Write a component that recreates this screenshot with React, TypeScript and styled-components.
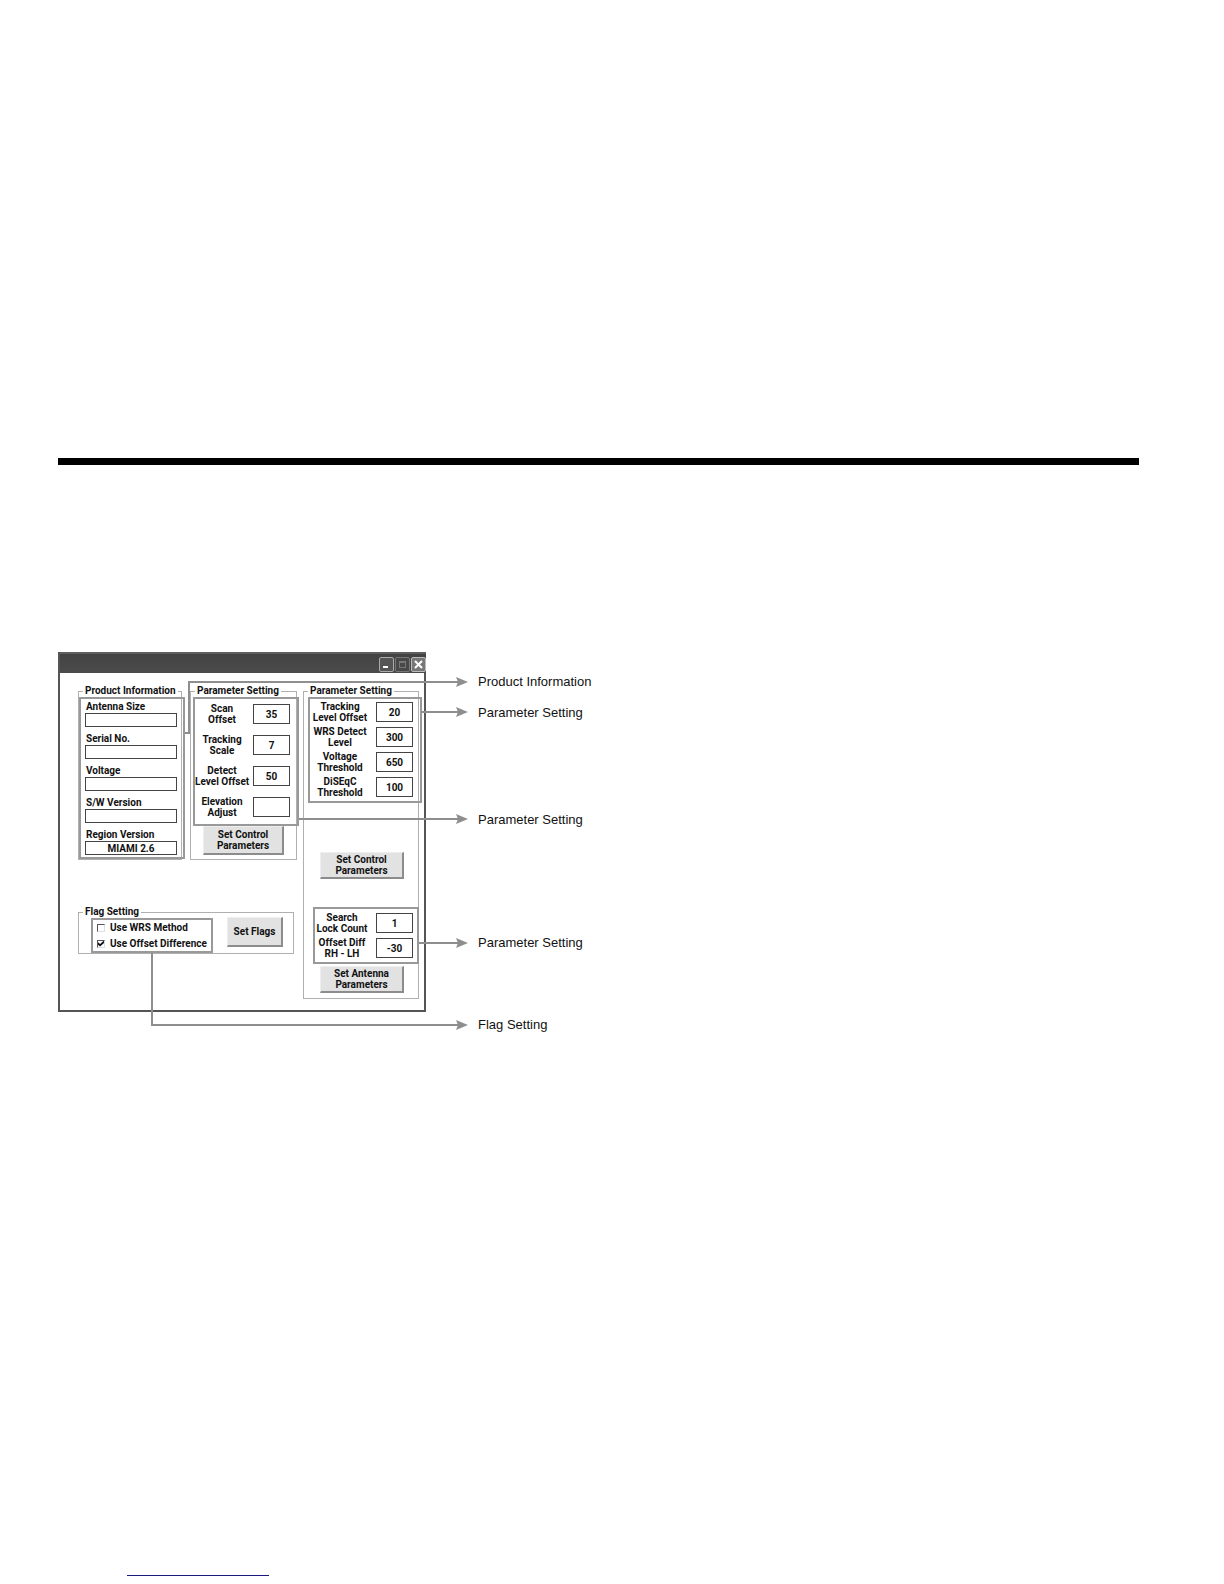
import React from "react";
import styled, { createGlobalStyle } from "styled-components";

const GlobalStyle = createGlobalStyle`
  *, *::before, *::after { box-sizing: border-box; }
  body { margin: 0; background: #fff; color: #111; }
`;

const uiFont = `Roboto, "Liberation Sans", sans-serif`;

const Page = styled.main`
  display: flex;
  flex-direction: column;
  min-height: 100vh;
  padding: 458px 85px 8px 58px;
`;

const Rule = styled.hr`
  width: 100%;
  height: 7px;
  margin: 0 0 187px;
  border: 0;
  background: #000;
`;

const Figure = styled.figure`
  position: relative;
  display: flex;
  align-items: flex-start;
  gap: 52px;
  margin: 0;
`;

const Window = styled.section`
  flex: none;
  border: 2px solid #555;
  border-top: 0;
  font: 700 10px/11px ${uiFont};
`;

const TitleBar = styled.header`
  display: flex;
  justify-content: flex-end;
  align-items: flex-end;
  gap: 1px;
  height: 21px;
  margin-right: -2px;
  padding-bottom: 1px;
  border-top: 2px solid #5e5e5e;
  background: linear-gradient(#424242, #4c4c4c);
`;

const CaptionButton = styled.button<{ $tone: string; $edge: string }>`
  width: 15px;
  height: 15px;
  padding: 0;
  border: 1px solid ${(p) => p.$edge};
  border-radius: 2px;
  background: ${(p) => p.$tone};
  svg { display: block; }
`;

const WindowBody = styled.div`
  display: flex;
  gap: 6px;
  padding: 12px 5px 11px 18px;
`;

const LeftSide = styled.div`
  display: flex;
  flex-direction: column;
  gap: 46px;
`;

const Columns = styled.div`
  display: flex;
  gap: 8px;
`;

const Group = styled.fieldset<{ $width: number }>`
  min-width: 0;
  width: ${(p) => p.$width}px;
  margin: 0;
  padding: 0;
  border: 1px solid #b0b0b0;
`;

const GroupTitle = styled.legend`
  margin-left: 4px;
  padding: 0 2px;
  line-height: 12px;
  white-space: nowrap;
`;

const Highlight = styled.div<{ $gap: number; $pad: string; $left?: number; $top?: number; $width?: number }>`
  display: flex;
  flex-direction: column;
  gap: ${(p) => p.$gap}px;
  width: ${(p) => p.$width ?? 106}px;
  margin: ${(p) => p.$top ?? 0}px 0 0 ${(p) => p.$left ?? 0}px;
  padding: ${(p) => p.$pad};
  border: 2px solid #999;
`;

const InfoField = styled.label`
  display: flex;
  flex-direction: column;
  line-height: 12px;
  text-indent: 1px;
`;

const TextBox = styled.input<{ $tall?: boolean }>`
  width: ${(p) => (p.$tall ? "37px" : "100%")};
  height: ${(p) => (p.$tall ? 20 : 14)}px;
  margin: 0;
  padding: 0;
  border: 1px solid #444;
  border-radius: 0;
  background: #fff;
  color: inherit;
  font: inherit;
  text-align: center;
`;

const ParamRow = styled.label<{ $label: number }>`
  display: grid;
  grid-template-columns: ${(p) => p.$label}px 37px;
  justify-content: space-between;
  align-items: center;
  height: 22px;
  text-align: center;
  white-space: pre;
`;

const PushButton = styled.button<{ $width: number; $height: number; $margin: string }>`
  display: block;
  width: ${(p) => p.$width}px;
  height: ${(p) => p.$height}px;
  margin: ${(p) => p.$margin};
  padding: 0;
  border: solid;
  border-width: 1px 2px 2px 1px;
  border-color: #eee #8c8c8c #8c8c8c #eee;
  background: #e2e2e2;
  color: inherit;
  font: inherit;
  white-space: pre;
`;

const FlagRow = styled.div`
  display: flex;
  align-items: flex-start;
  gap: 14px;
  padding-left: 12px;
`;

const CheckLabel = styled.label`
  display: flex;
  align-items: center;
  gap: 5px;
  white-space: nowrap;
`;

const CheckBox = styled.input`
  display: grid;
  place-items: center;
  appearance: none;
  width: 8px;
  height: 8px;
  margin: 0;
  border: 1px solid #ddd;
  border-top-color: #555;
  border-left-color: #555;
  &:checked::after {
    content: "";
    width: 6px;
    height: 6px;
    background: #111;
    clip-path: polygon(0 30%, 35% 60%, 100% 0, 100% 40%, 35% 100%, 0 70%);
  }
`;

const CalloutList = styled.ul`
  display: grid;
  grid-template-rows: 31px 107px 123px 82px 16px;
  margin: 0;
  padding: 22px 0 0;
  list-style: none;
  font: 13px/16px "Liberation Sans", Arial, sans-serif;
`;

const CalloutLines = styled.svg`
  position: absolute;
  top: 0;
  left: 0;
  pointer-events: none;
`;

const Footer = styled.footer`
  margin-top: auto;
  padding-left: 69px;
`;

const FooterLink = styled.a`
  display: block;
  width: 142px;
  height: 14px;
  border-bottom: 1px solid #19197c;
`;

type Param = [label: string, value: string];

const productInfo: Param[] = [
  ["Antenna Size", ""],
  ["Serial No.", ""],
  ["Voltage", ""],
  ["S/W Version", ""],
  ["Region Version", "MIAMI 2.6"],
];

const scanParams: Param[] = [
  ["Scan\nOffset", "35"],
  ["Tracking\nScale", "7"],
  ["Detect\nLevel Offset", "50"],
  ["Elevation\nAdjust", ""],
];

const trackingParams: Param[] = [
  ["Tracking\nLevel Offset", "20"],
  ["WRS Detect\nLevel", "300"],
  ["Voltage\nThreshold", "650"],
  ["DiSEqC\nThreshold", "100"],
];

const antennaParams: Param[] = [
  ["Search\nLock Count", "1"],
  ["Offset Diff\nRH - LH", "-30"],
];

const callouts = [
  "Product Information",
  "Parameter Setting",
  "Parameter Setting",
  "Parameter Setting",
  "Flag Setting",
];

const arrowRows = [30, 60, 167, 291, 373];

function ParamRows({ items, label }: { items: Param[]; label: number }) {
  return (
    <>
      {items.map(([name, value]) => (
        <ParamRow key={name} $label={label}>
          <span>{name}</span>
          <TextBox $tall defaultValue={value} />
        </ParamRow>
      ))}
    </>
  );
}

export default function App() {
  return (
    <Page>
      <GlobalStyle />
      <Rule />
      <Figure>
        <Window>
          <TitleBar>
            <CaptionButton aria-label="Minimize" $tone="#555" $edge="#aaa">
              <svg width="13" height="13"><path d="M3 9h5" stroke="#fff" strokeWidth="2" /></svg>
            </CaptionButton>
            <CaptionButton aria-label="Maximize" $tone="#484848" $edge="#777">
              <svg width="13" height="13"><path d="M3 3.5h7M3.5 3v7M9.5 3v7M3 9.5h7M3 4.5h7" stroke="#777" /></svg>
            </CaptionButton>
            <CaptionButton aria-label="Close" $tone="#777" $edge="#bbb">
              <svg width="13" height="13"><path d="M3 3l7 7M10 3l-7 7" stroke="#fff" strokeWidth="2" /></svg>
            </CaptionButton>
          </TitleBar>
          <WindowBody>
            <LeftSide>
              <Columns>
                <Group $width={104}>
                  <GroupTitle>Product Information</GroupTitle>
                  <Highlight $gap={6} $pad="2px 6px 2px 4px">
                    {productInfo.map(([name, value]) => (
                      <InfoField key={name}>
                        {name}
                        <TextBox defaultValue={value} />
                      </InfoField>
                    ))}
                  </Highlight>
                </Group>
                <Group $width={107}>
                  <GroupTitle>Parameter Setting</GroupTitle>
                  <Highlight $gap={9} $pad="4px 7px 6px 0" $left={2}>
                    <ParamRows items={scanParams} label={54} />
                  </Highlight>
                  <PushButton $width={81} $height={29} $margin="0 0 4px 12px">{"Set Control\nParameters"}</PushButton>
                </Group>
              </Columns>
              <Group $width={216}>
                <GroupTitle>Flag Setting</GroupTitle>
                <FlagRow>
                  <Highlight $gap={5} $pad="2px 4px" $width={122}>
                    <CheckLabel><CheckBox type="checkbox" />Use WRS Method</CheckLabel>
                    <CheckLabel><CheckBox type="checkbox" defaultChecked />Use Offset Difference</CheckLabel>
                  </Highlight>
                  <PushButton $width={56} $height={30} $margin="-1px 0 0">Set Flags</PushButton>
                </FlagRow>
              </Group>
            </LeftSide>
            <Group $width={116}>
              <GroupTitle>Parameter Setting</GroupTitle>
              <Highlight $gap={3} $pad="2px 7px 3px 0" $left={4} $width={114}>
                <ParamRows items={trackingParams} label={60} />
              </Highlight>
              <PushButton $width={84} $height={27} $margin="49px 0 0 16px">{"Set Control\nParameters"}</PushButton>
              <Highlight $gap={3} $pad="3px 4px 3px 0" $left={9} $top={28}>
                <ParamRows items={antennaParams} label={54} />
              </Highlight>
              <PushButton $width={84} $height={27} $margin="2px 0 5px 16px">{"Set Antenna\nParameters"}</PushButton>
            </Group>
          </WindowBody>
        </Window>
        <CalloutList>
          {callouts.map((text, i) => (
            <li key={i}>{text}</li>
          ))}
        </CalloutList>
        <CalloutLines width="412" height="382" aria-hidden="true">
          <path
            d="M127 81H131V30H401M363 60H401M241 167H401M361 291H401M94 301V373H401"
            fill="none"
            stroke="#8e8e8e"
            strokeWidth="2"
          />
          {arrowRows.map((y) => (
            <path key={y} d={`M398 ${y - 5}L410 ${y}L398 ${y + 5}L400 ${y}Z`} fill="#8e8e8e" />
          ))}
        </CalloutLines>
      </Figure>
      <Footer>
        <FooterLink href="#" aria-label="Website" />
      </Footer>
    </Page>
  );
}
